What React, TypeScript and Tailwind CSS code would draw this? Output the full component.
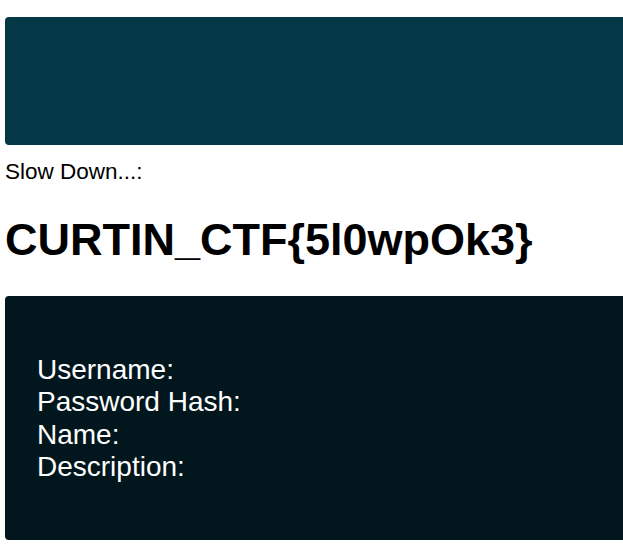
export default function App() {
  const champs = ['Username:', 'Password Hash:', 'Name:', 'Description:']

  return (
    <div className="w-screen min-h-screen overflow-hidden bg-white font-['Liberation_Sans',Arial,sans-serif] text-black">
      <div className="pl-[5px] pt-[17px] w-[660px]">
        <div className="h-[128px] rounded-[4px] bg-[#043846]" />

        <p className="mt-[14px] text-[22.5px] leading-[26px]">Slow Down...:</p>

        <h1 className="mt-[29px] text-[45px] leading-[52px] font-bold">CURTIN_CTF{'{'}5l0wpOk3{'}'}</h1>

        <div className="mt-[30px] h-[244px] rounded-[4px] bg-[#02161d] pl-[32px] pt-[58px] text-white">
          {champs.map(c => (
            <p key={c} className="text-[28px] leading-[32.3px]">{c}</p>
          ))}
        </div>
      </div>
    </div>
  )
}
